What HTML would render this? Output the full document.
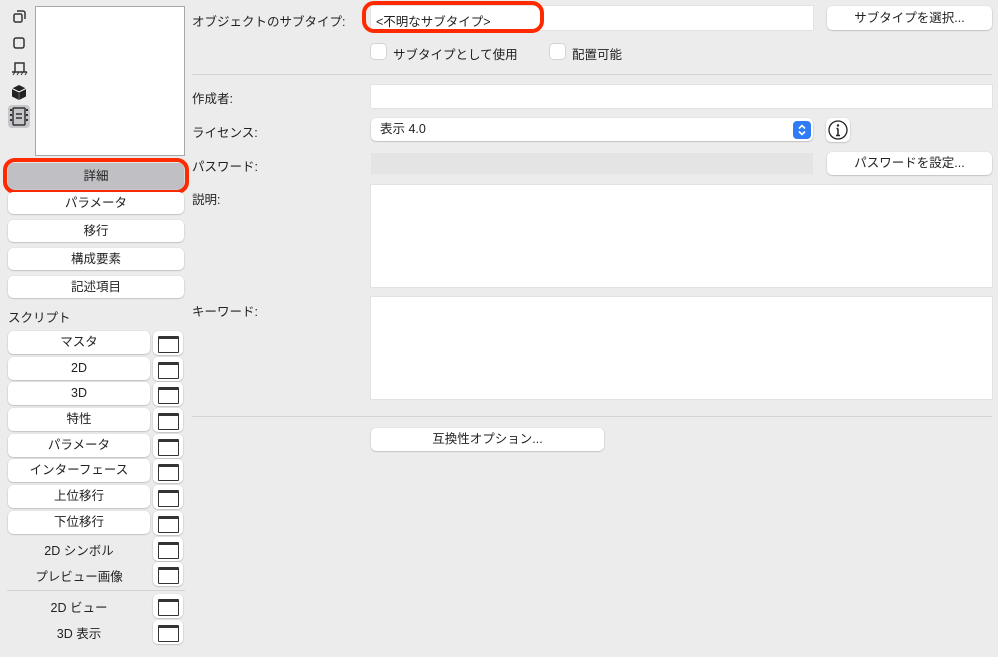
<!DOCTYPE html>
<html><head><meta charset="utf-8"><style>
*{box-sizing:border-box;margin:0;padding:0}
body{width:998px;height:657px;background:#ececec;font-family:"Liberation Sans","Noto Sans CJK JP",sans-serif;font-size:12.5px;color:#222;position:relative;overflow:hidden}
.a{position:absolute}
.btn{position:absolute;background:#fff;border-radius:5px;box-shadow:0 0.5px 1.5px rgba(0,0,0,.3);text-align:center;font-size:12.5px;color:#222}
.lbl{position:absolute;font-size:12.5px;color:#222}
.fld{position:absolute;background:#fff;box-shadow:0 0 0 0.5px #d8d8d8}
.win{position:absolute;left:153px;width:30px;height:24px;background:#fff;border-radius:5px;box-shadow:0 0.5px 1.5px rgba(0,0,0,.3)}
.win::after{content:"";position:absolute;left:5px;top:5px;width:19px;height:13px;border:1.5px solid #333;border-top-width:3px;border-radius:1px}
.c{position:absolute;text-align:center;font-size:12.5px}
</style></head><body>
<svg class="a" style="left:8px;top:6px" width="24" height="124" viewBox="0 0 24 124">
<g fill="none" stroke="#333" stroke-width="1.5">
<rect x="6" y="8" width="8" height="8" rx="1.5"/><path d="M9 5h6a2 2 0 0 1 2 2v6"/>
<rect x="6" y="32" width="10" height="10" rx="2"/>
<path d="M7 66v-9h9v9M4 66h15"/><path d="M5 69l2-3M9 69l2-3M13 69l2-3M17 69l2-3" stroke-width="1"/>
</g>
<path d="M11 79l7 3.5v8L11 94l-7-3.5v-8z" fill="#222"/><path d="M4 82.5l7 3.5 7-3.5" stroke="#fff" stroke-width="1" fill="none"/><path d="M11 86v8" stroke="#666"/>
<rect x="0" y="99" width="22" height="23" rx="4" fill="#c6c6ca"/>
<g stroke="#333" stroke-width="1.5" fill="none"><path d="M5 102v17M17 102v17M5 102h12M5 119h12"/><path d="M8 108h6M8 112h6" stroke-width="1.5"/></g>
<g fill="#333"><rect x="2" y="103" width="2" height="2"/><rect x="2" y="108" width="2" height="2"/><rect x="2" y="113" width="2" height="2"/><rect x="18" y="103" width="2" height="2"/><rect x="18" y="108" width="2" height="2"/><rect x="18" y="113" width="2" height="2"/></g>
</svg>
<div class="a" style="left:35px;top:6px;width:150px;height:150px;background:#fff;border:1.5px solid #a8a8a8"></div>

<div class="a" style="left:3px;top:158px;width:186px;height:36px;border:4px solid #ff2a00;border-radius:12px"></div>
<div class="btn" style="left:8px;top:163px;width:176px;height:26px;line-height:26px;background:#c0bfc4">詳細</div>
<div class="btn" style="left:8px;top:192px;width:176px;height:22px;line-height:22px">パラメータ</div>
<div class="btn" style="left:8px;top:220px;width:176px;height:22px;line-height:22px">移行</div>
<div class="btn" style="left:8px;top:248px;width:176px;height:22px;line-height:22px">構成要素</div>
<div class="btn" style="left:8px;top:276px;width:176px;height:22px;line-height:22px">記述項目</div>
<div class="lbl" style="left:8px;top:307px">スクリプト</div>

<div class="btn" style="left:8px;top:331px;width:142px;height:23px;line-height:23px">マスタ</div><div class="win" style="top:331px"></div>
<div class="btn" style="left:8px;top:357px;width:142px;height:23px;line-height:23px">2D</div><div class="win" style="top:357px"></div>
<div class="btn" style="left:8px;top:382px;width:142px;height:23px;line-height:23px">3D</div><div class="win" style="top:382px"></div>
<div class="btn" style="left:8px;top:408px;width:142px;height:23px;line-height:23px">特性</div><div class="win" style="top:408px"></div>
<div class="btn" style="left:8px;top:434px;width:142px;height:23px;line-height:23px">パラメータ</div><div class="win" style="top:434px"></div>
<div class="btn" style="left:8px;top:459px;width:142px;height:23px;line-height:23px">インターフェース</div><div class="win" style="top:459px"></div>
<div class="btn" style="left:8px;top:485px;width:142px;height:23px;line-height:23px">上位移行</div><div class="win" style="top:485px"></div>
<div class="btn" style="left:8px;top:511px;width:142px;height:23px;line-height:23px">下位移行</div><div class="win" style="top:511px"></div>
<div class="c" style="left:8px;top:540px;width:142px">2D シンボル</div><div class="win" style="top:537px"></div>
<div class="c" style="left:8px;top:566px;width:142px">プレビュー画像</div><div class="win" style="top:562px"></div>
<div class="a" style="left:7px;top:590px;width:178px;height:1px;background:#d4d4d4"></div>
<div class="c" style="left:8px;top:597px;width:142px">2D ビュー</div><div class="win" style="top:594px"></div>
<div class="c" style="left:8px;top:623px;width:142px">3D 表示</div><div class="win" style="top:620px"></div>

<div class="lbl" style="left:192px;top:11px">オブジェクトのサブタイプ:</div>
<div class="fld" style="left:371px;top:6px;width:442px;height:24px"></div>
<div class="lbl" style="left:376px;top:11px">&lt;不明なサブタイプ&gt;</div>
<div class="a" style="left:362px;top:1px;width:182px;height:32px;border:4px solid #ff2a00;border-radius:12px"></div>
<div class="btn" style="left:827px;top:6px;width:165px;height:24px;line-height:24px">サブタイプを選択...</div>
<div class="a" style="left:371px;top:44px;width:15px;height:15px;background:#fff;border-radius:3px;box-shadow:0 0 0 0.5px #bbb"></div>
<div class="lbl" style="left:393px;top:44px">サブタイプとして使用</div>
<div class="a" style="left:550px;top:44px;width:15px;height:15px;background:#fff;border-radius:3px;box-shadow:0 0 0 0.5px #bbb"></div>
<div class="lbl" style="left:572px;top:44px">配置可能</div>
<div class="a" style="left:192px;top:74px;width:800px;height:1px;background:#d4d4d4"></div>

<div class="lbl" style="left:192px;top:88px">作成者:</div>
<div class="fld" style="left:371px;top:85px;width:621px;height:23px"></div>
<div class="lbl" style="left:192px;top:122px">ライセンス:</div>
<div class="btn" style="left:371px;top:118px;width:442px;height:23px;text-align:left;padding-left:9px;line-height:23px">表示 4.0</div>
<div class="a" style="left:793px;top:121px;width:18px;height:18px;background:#2f7cf6;border-radius:4px"></div>
<svg class="a" style="left:793px;top:121px" width="18" height="18"><path d="M6 7.5l3-3 3 3M6 10.5l3 3 3-3" stroke="#fff" stroke-width="1.6" fill="none"/></svg>
<div class="a" style="left:826px;top:118px;width:24px;height:24px;background:#fff;border-radius:5px;box-shadow:0 0.5px 1.5px rgba(0,0,0,.3)"></div>
<svg class="a" style="left:826px;top:118px" width="24" height="24"><circle cx="12" cy="12" r="9" stroke="#222" stroke-width="1.3" fill="none"/><circle cx="12" cy="7.5" r="1.2" fill="#222"/><path d="M12 10.5v7M10 17.5h4M10.5 10.5h1.5" stroke="#222" stroke-width="1.5"/></svg>
<div class="lbl" style="left:192px;top:156px">パスワード:</div>
<div class="a" style="left:371px;top:153px;width:442px;height:21px;background:#e4e4e4"></div>
<div class="btn" style="left:827px;top:152px;width:165px;height:23px;line-height:23px">パスワードを設定...</div>
<div class="lbl" style="left:192px;top:189px">説明:</div>
<div class="fld" style="left:371px;top:185px;width:621px;height:102px"></div>
<div class="lbl" style="left:192px;top:301px">キーワード:</div>
<div class="fld" style="left:371px;top:297px;width:621px;height:102px"></div>
<div class="a" style="left:192px;top:416px;width:800px;height:1px;background:#d4d4d4"></div>
<div class="btn" style="left:371px;top:428px;width:233px;height:23px;line-height:23px">互換性オプション...</div>
</body></html>
